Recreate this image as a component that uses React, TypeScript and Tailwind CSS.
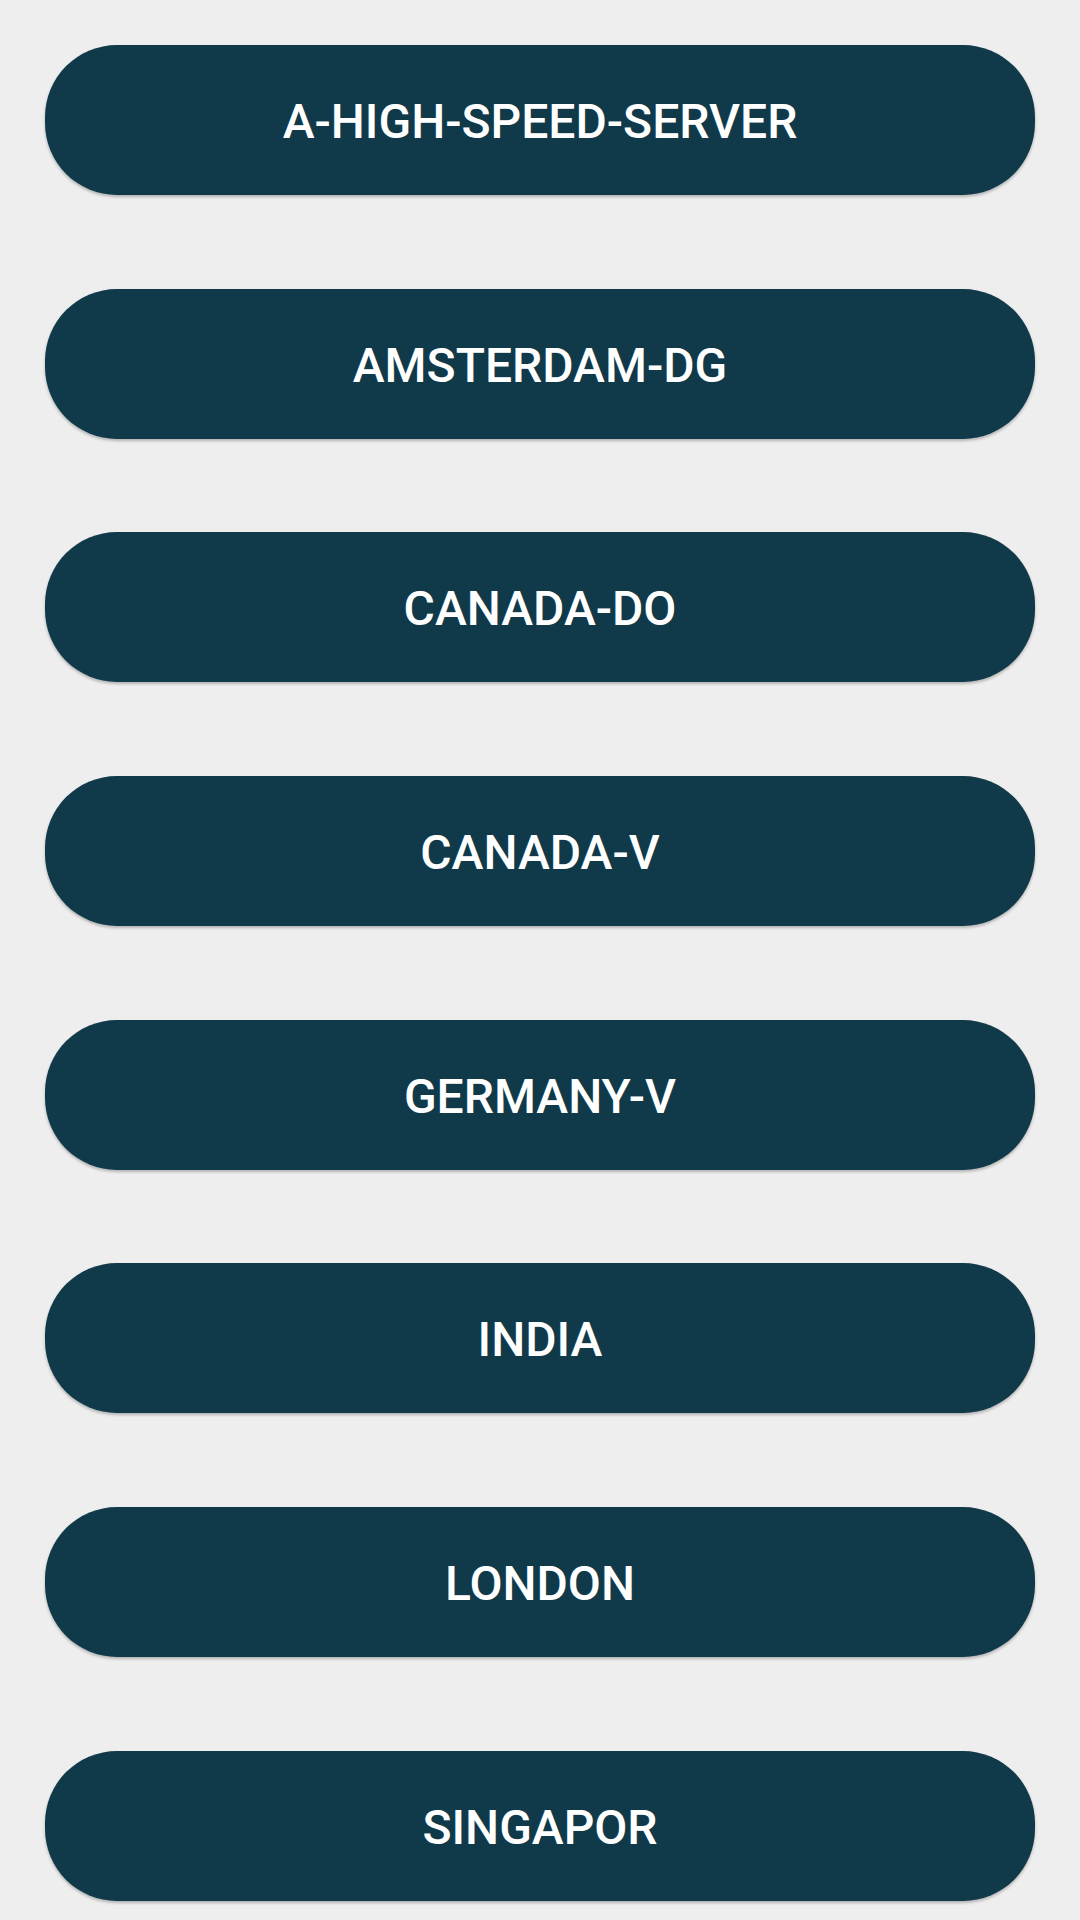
const servers = [
  "A-HIGH-SPEED-SERVER",
  "AMSTERDAM-DG",
  "CANADA-DO",
  "CANADA-V",
  "GERMANY-V",
  "INDIA",
  "LONDON",
  "SINGAPOR",
]

function ServerButton({ name }: { name: string }) {
  return (
    <button className="h-[150px] w-full rounded-[72px] bg-[#103a4a] text-white text-[48px] font-medium pt-[4px] shadow-[0_2px_3px_rgba(0,0,0,0.25)] flex items-center justify-center">
      {name}
    </button>
  )
}

export default function App() {
  return (
    <div className="min-h-[1920px] w-[1080px] bg-[#eeeeee] px-[45px] pt-[45px] font-['Roboto',sans-serif] overflow-hidden">
      <div className="flex flex-col gap-[93.7px]">
        {servers.map((s) => (
          <ServerButton key={s} name={s} />
        ))}
      </div>
    </div>
  )
}
